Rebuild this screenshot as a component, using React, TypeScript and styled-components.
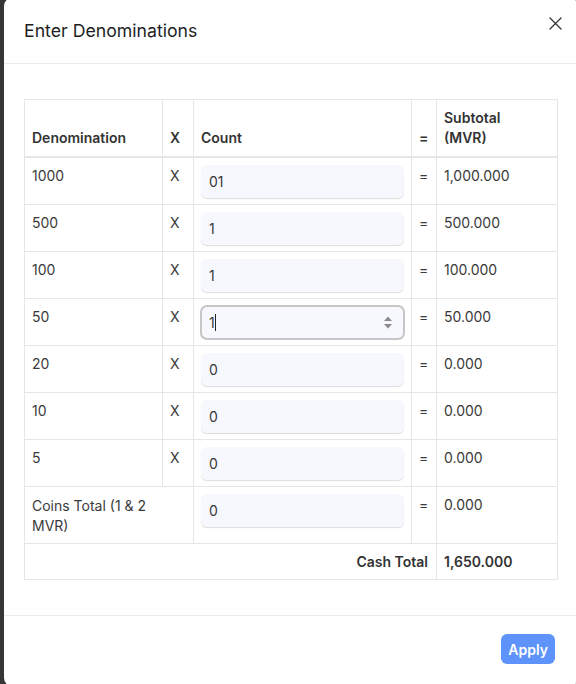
import React from "react";
import styled, { createGlobalStyle } from "styled-components";

const Global = createGlobalStyle`
  html, body { margin: 0; padding: 0; background: #363636; }
  body { font-family: Inter, "Noto Sans", sans-serif; overflow: hidden; }
  * { box-sizing: border-box; }
`;

const Page = styled.div`
  width: 576px;
  height: 684px;
  overflow: hidden;
  padding-left: 4px;
`;

const Modal = styled.div`
  width: 574px;
  height: 688px;
  margin-top: -2px;
  background: #fff;
  border-radius: 8px;
  display: flex;
  flex-direction: column;
`;

const Header = styled.div`
  display: flex;
  justify-content: space-between;
  align-items: flex-start;
  padding: 21px 14px 20px 20px;
  border-bottom: 1px solid #ebebeb;
`;

const Title = styled.h2`
  margin: 0;
  font-size: 17.7px;
  line-height: 24px;
  font-weight: 400;
  color: #1e1e1e;
`;

const CloseButton = styled.button`
  margin-top: -4px;
  border: none;
  background: transparent;
  padding: 2px;
  width: 17px;
  height: 17px;
  display: flex;
  align-items: center;
  justify-content: center;
  cursor: pointer;
`;

const Body = styled.div`
  flex: 1;
  padding: 35px 20px 34px 20px;
`;

const Table = styled.table`
  width: 533px;
  border-collapse: collapse;
  table-layout: fixed;
  font-size: 14px;
  color: #383838;
  border: 1px solid #e6e6e6;
`;

const HeadCell = styled.th<{ $w: number }>`
  width: ${(p) => p.$w}px;
  text-align: left;
  vertical-align: bottom;
  font-weight: 600;
  color: #333;
  line-height: 20px;
  padding: 8px 7px 8px;
  border-left: 1px solid #e6e6e6;
  border-bottom: 2px solid #e6e6e6;
`;

const Cell = styled.td<{ $right?: boolean; $bold?: boolean }>`
  vertical-align: top;
  line-height: 20px;
  padding: 8px 8px 7px 7px;
  border: 1px solid #e6e6e6;
  text-align: ${(p) => (p.$right ? "right" : "left")};
  font-weight: ${(p) => (p.$bold ? 600 : 400)};
  color: ${(p) => (p.$bold ? "#333" : "#3a3a3a")};
`;

const CoinsCell = styled(Cell)`
  padding: 9px 8px 7px 7px;
`;

const InputCell = styled.td`
  vertical-align: top;
  padding: 7px 7px 6px 7px;
  border: 1px solid #e6e6e6;
`;

const Wrap = styled.span<{ $max: number }>`
  display: block;
  max-width: ${(p) => p.$max}px;
`;

const CountInput = styled.input`
  display: block;
  width: 203px;
  height: 33px;
  border: none;
  border-radius: 6px;
  background: #f7f8fd;
  box-shadow: 0 1px 1px rgba(0, 0, 0, 0.14);
  padding: 0 8px;
  font-family: Inter, "Noto Sans", sans-serif;
  font-size: 14px;
  color: #383838;
  outline: none;
`;

const FocusBox = styled.div`
  display: flex;
  align-items: center;
  width: 205px;
  height: 35px;
  margin: -1px 0 -1px -1px;
  border: 2px solid #c6c6c6;
  border-radius: 7px;
  background: #f7f8fd;
  padding: 0 10px 0 7px;
`;

const Caret = styled.span`
  display: inline-block;
  width: 1px;
  height: 17px;
  background: #222;
  margin-left: 0px;
  vertical-align: middle;
`;

const FieldText = styled.span`
  flex: 1;
  display: flex;
  align-items: center;
  font-size: 14px;
  color: #383838;
`;

const Footer = styled.div`
  display: flex;
  justify-content: flex-end;
  padding: 18px 23px 22px;
  border-top: 1px solid #ebebeb;
`;

const ApplyButton = styled.button`
  height: 30px;
  padding: 0 7px;
  border: none;
  border-radius: 6px;
  background: #5d93fb;
  color: #fff;
  font-family: Inter, "Noto Sans", sans-serif;
  font-weight: 600;
  font-size: 14px;
  cursor: pointer;
`;

const rows = [
  { d: "1000", c: "01", s: "1,000.000" },
  { d: "500", c: "1", s: "500.000" },
  { d: "100", c: "1", s: "100.000" },
  { d: "50", c: "1", s: "50.000", focus: true },
  { d: "20", c: "0", s: "0.000" },
  { d: "10", c: "0", s: "0.000" },
  { d: "5", c: "0", s: "0.000" },
];

const Spinner = () => (
  <svg width="10" height="15" viewBox="0 0 10 15">
    <polygon points="1,6 5,1.5 9,6" fill="#8a8a8a" />
    <polygon points="1,9 9,9 5,13.5" fill="#8a8a8a" />
  </svg>
);

export default function App() {
  return (
    <Page>
      <Global />
      <Modal>
        <Header>
          <Title>Enter Denominations</Title>
          <CloseButton aria-label="Close">
            <svg width="13" height="13" viewBox="0 0 13 13">
              <path d="M1 1 L12 12 M12 1 L1 12" stroke="#333" strokeWidth="1.3" strokeLinecap="round" />
            </svg>
          </CloseButton>
        </Header>
        <Body>
          <Table>
            <thead>
              <tr>
                <HeadCell $w={138}>Denomination</HeadCell>
                <HeadCell $w={31}>X</HeadCell>
                <HeadCell $w={218}>Count</HeadCell>
                <HeadCell $w={25}>=</HeadCell>
                <HeadCell $w={121}>
                  <Wrap $max={80}>Subtotal (MVR)</Wrap>
                </HeadCell>
              </tr>
            </thead>
            <tbody>
              {rows.map((r) => (
                <tr key={r.d}>
                  <Cell>{r.d}</Cell>
                  <Cell>X</Cell>
                  <InputCell>
                    {r.focus ? (
                      <FocusBox>
                        <FieldText>
                          {r.c}
                          <Caret />
                        </FieldText>
                        <Spinner />
                      </FocusBox>
                    ) : (
                      <CountInput defaultValue={r.c} />
                    )}
                  </InputCell>
                  <Cell>=</Cell>
                  <Cell>{r.s}</Cell>
                </tr>
              ))}
              <tr>
                <CoinsCell colSpan={2}>
                  <Wrap $max={125}>Coins Total (1 &amp; 2 MVR)</Wrap>
                </CoinsCell>
                <InputCell>
                  <CountInput defaultValue="0" />
                </InputCell>
                <Cell>=</Cell>
                <Cell>0.000</Cell>
              </tr>
              <tr>
                <Cell colSpan={4} $right $bold>
                  Cash Total
                </Cell>
                <Cell $bold>1,650.000</Cell>
              </tr>
            </tbody>
          </Table>
        </Body>
        <Footer>
          <ApplyButton>Apply</ApplyButton>
        </Footer>
      </Modal>
    </Page>
  );
}
